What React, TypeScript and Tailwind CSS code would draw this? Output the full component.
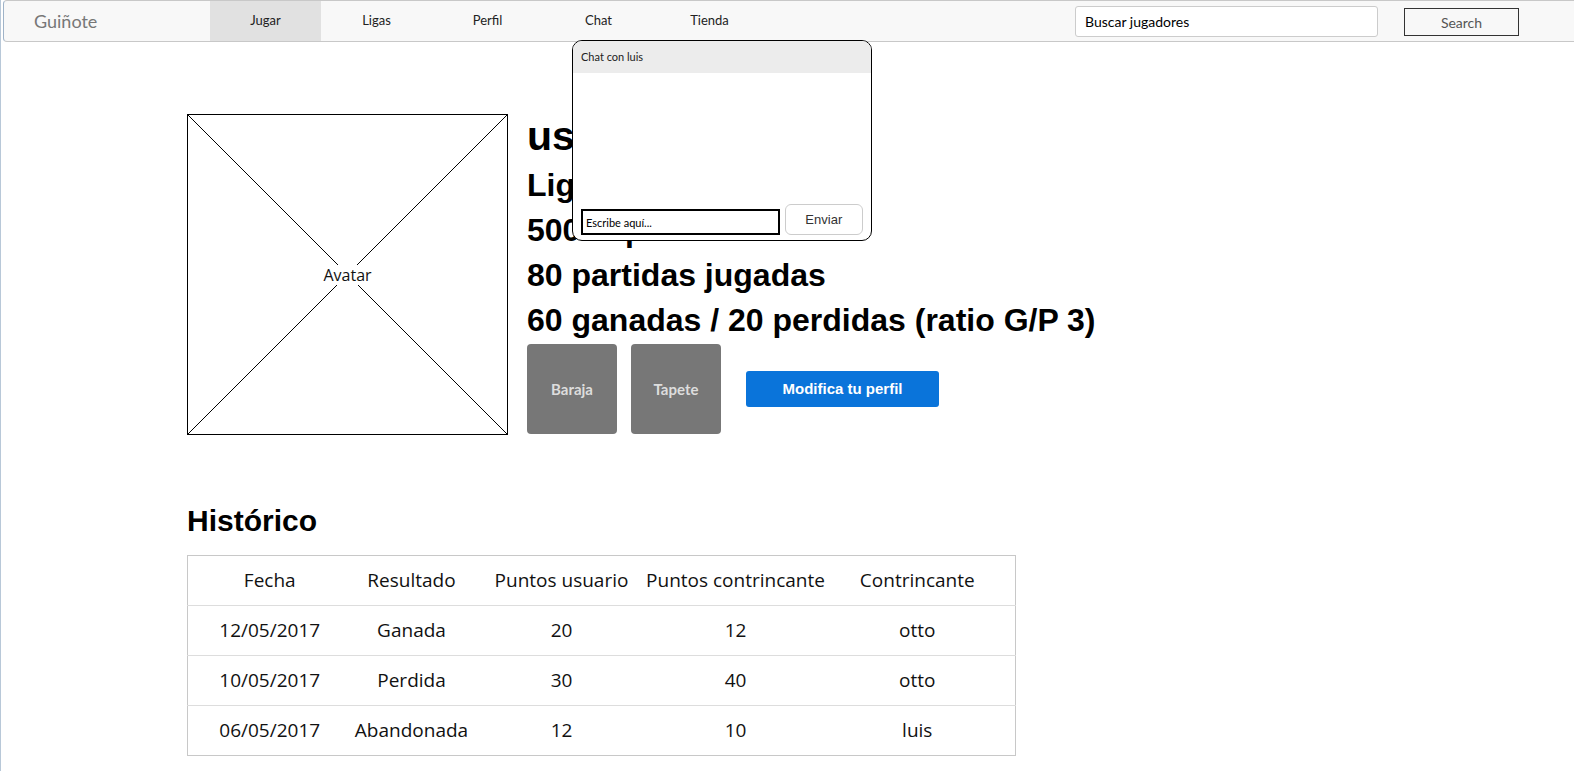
import React from "react";

const rows = [
  { fecha: "12/05/2017", resultado: "Ganada", pu: "20", pc: "12", rival: "otto" },
  { fecha: "10/05/2017", resultado: "Perdida", pu: "30", pc: "40", rival: "otto" },
  { fecha: "06/05/2017", resultado: "Abandonada", pu: "12", pc: "10", rival: "luis" },
];

const navItems = ["Jugar", "Ligas", "Perfil", "Chat", "Tienda"];

const headers = [
  { label: "Fecha", w: "w-[164px]" },
  { label: "Resultado", w: "w-[120px]" },
  { label: "Puntos usuario", w: "w-[180px]" },
  { label: "Puntos contrincante", w: "w-[168px]" },
  { label: "Contrincante", w: "" },
];

function Navbar() {
  return (
    <nav className="flex h-[42px] items-stretch rounded-l-[4px] border border-[#c8c8c8] border-l-[#9fb3c8] bg-[#f8f8f8] ml-[2px] mr-[-8px]">
      <div className="w-[206px] flex items-center pl-[30px] text-[18px] text-[#777]">Guiñote</div>
      <ul className="flex">
        {navItems.map((item, i) => (
          <li
            key={item}
            className={`w-[111px] flex items-center justify-center text-[13px] text-[#222] ${i === 0 ? "bg-[#e1e1e1]" : ""}`}
          >
            {item}
          </li>
        ))}
      </ul>
      <div className="flex-1" />
      <div className="flex items-start pt-[5px]">
        <input
          className="w-[303px] h-[31px] rounded-[3px] border border-[#ccc] bg-white px-[9px] text-[14px] text-black outline-none"
          defaultValue="Buscar jugadores"
        />
        <button className="ml-[26px] mt-[2px] w-[115px] h-[28px] border border-[#333] bg-[#f8f8f8] text-[14px] text-[#555]">
          Search
        </button>
      </div>
      <div className="w-[62px]" />
    </nav>
  );
}

function ChatPopup() {
  return (
    <div className="absolute left-[571px] top-[40px] w-[300px] h-[201px] rounded-[10px] border border-black bg-white overflow-hidden flex flex-col">
      <div className="h-[32px] bg-[#ececec] px-[8px] pt-[8px] text-[11px] text-[#222]">Chat con luis</div>
      <div className="flex-1" />
      <div className="flex items-end px-[8px] pb-[5px] gap-[5px]">
        <input
          className="w-[200px] h-[26px] border-2 border-black px-[3px] text-[11px] text-black outline-none"
          defaultValue="Escribe aquí..."
        />
        <button className="w-[79px] h-[31px] rounded-[6px] border border-[#ccc] bg-white text-[13px] text-[#333] font-['Liberation_Sans',Arial,sans-serif]">
          Enviar
        </button>
      </div>
    </div>
  );
}

function Avatar() {
  return (
    <div className="relative w-[321px] h-[321px] border border-black mt-[4px] shrink-0">
      <svg className="absolute inset-0 w-full h-full" viewBox="0 0 321 321" preserveAspectRatio="none">
        <line x1="0" y1="0" x2="321" y2="321" stroke="black" strokeWidth="1" />
        <line x1="321" y1="0" x2="0" y2="321" stroke="black" strokeWidth="1" />
      </svg>
      <div className="absolute inset-0 flex items-center justify-center">
        <span className="bg-white px-[1px] text-[16px] text-[#111] leading-[20px] font-['Open_Sans',sans-serif]">Avatar</span>
      </div>
    </div>
  );
}

export default function App() {
  return (
    <div className="relative min-h-screen overflow-hidden bg-white border-l border-l-[#b8c8d8] font-['Lato','Noto_Sans',sans-serif]">
      <Navbar />
      <main className="pl-[186px] pt-[68px]">
        <section className="flex gap-[19px]">
          <Avatar />
          <div className="font-['Liberation_Sans',Arial,sans-serif] font-bold text-black">
            <div className="text-[41px] leading-[53px]">usuario</div>
            <div className="text-[32px] leading-[45px]">Liga Oro</div>
            <div className="text-[32px] leading-[45px]">50020 ptos.</div>
            <div className="text-[32px] leading-[45px]">80 partidas jugadas</div>
            <div className="text-[32px] leading-[45px]">60 ganadas / 20 perdidas (ratio G/P 3)</div>
            <div className="flex items-center mt-[1px]">
              <div className="w-[90px] h-[90px] rounded-[4px] bg-[#777] flex items-center justify-center text-[15px] font-bold text-[#ddd] font-['Lato',sans-serif]">
                Baraja
              </div>
              <div className="ml-[14px] w-[90px] h-[90px] rounded-[4px] bg-[#777] flex items-center justify-center text-[15px] font-bold text-[#ddd] font-['Lato',sans-serif]">
                Tapete
              </div>
              <button className="ml-[25px] w-[193px] h-[36px] rounded-[3px] bg-[#0a74da] text-white text-[15px] font-bold font-['Liberation_Sans',Arial,sans-serif]">
                Modifica tu perfil
              </button>
            </div>
          </div>
        </section>

        <h2 className="mt-[68px] text-[30px] leading-[36px] font-bold text-black font-['Liberation_Sans',Arial,sans-serif]">
          Histórico
        </h2>
        <table className="mt-[16px] w-[829px] border border-[#c8c8c8] border-collapse text-[19px] text-[#111] table-fixed font-['Open_Sans',sans-serif]">
          <thead>
            <tr className="h-[50px]">
              {headers.map((h) => (
                <th key={h.label} className={`${h.w} p-0 font-normal`}>
                  <div className="-mx-[12px] whitespace-nowrap text-center">{h.label}</div>
                </th>
              ))}
            </tr>
          </thead>
          <tbody>
            {rows.map((r) => (
              <tr key={r.fecha} className="h-[50px] border-t border-[#ddd]">
                <td className="text-center">{r.fecha}</td>
                <td className="text-center">{r.resultado}</td>
                <td className="text-center">{r.pu}</td>
                <td className="text-center">{r.pc}</td>
                <td className="text-center">{r.rival}</td>
              </tr>
            ))}
          </tbody>
        </table>
      </main>
      <ChatPopup />
    </div>
  );
}
